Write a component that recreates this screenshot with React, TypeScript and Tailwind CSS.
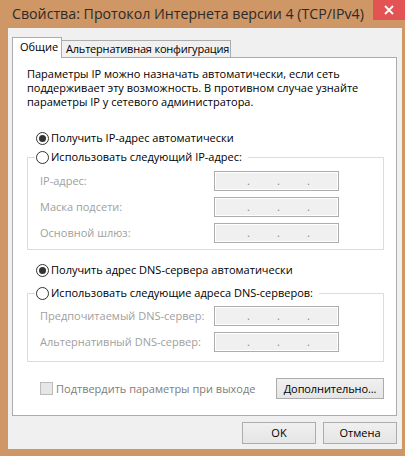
import React from "react";

const font = { fontFamily: '"Open Sans", "Liberation Sans", sans-serif' };

function Radio({ checked }: { checked?: boolean }) {
  return (
    <svg width="13" height="13" viewBox="0 0 13 13" className="shrink-0">
      <circle cx="6.5" cy="6.5" r="6" fill="#ffffff" stroke="#333333" strokeWidth="1" />
      {checked && <circle cx="6.5" cy="6.5" r="3.5" fill="#333333" />}
    </svg>
  );
}

function IpField() {
  return (
    <div className="w-[125px] h-[20px] border border-[#adadad] bg-[#f0f0f0] shadow-[inset_0_0_0_1px_#ffffff] flex items-end pb-[3px] pl-[32px] text-[11px] leading-[12px] text-[#7a8a99]">
      <span className="w-[30px]">.</span>
      <span className="w-[30px]">.</span>
      <span className="w-[30px]">.</span>
    </div>
  );
}

function FieldRow({ label }: { label: string }) {
  return (
    <div className="flex items-center h-[20px] pl-[12px]">
      <div className="w-[174px] text-[11px] text-[#a0a0a0] leading-[14px] whitespace-nowrap">{label}</div>
      <IpField />
    </div>
  );
}

function WinButton({ children, w }: { children: React.ReactNode; w: string }) {
  return (
    <div
      className={`${w} flex items-center justify-center border border-[#acacac] bg-gradient-to-b from-[#f0f0f0] to-[#e5e5e5] text-[11px] text-black leading-[14px] whitespace-nowrap`}
    >
      {children}
    </div>
  );
}

export default function App() {
  return (
    <div className="w-[405px] h-[456px] bg-[#cf9666] flex flex-col overflow-hidden" style={font}>
      {/* Title bar */}
      <div className="h-[28px] flex items-start justify-between shrink-0">
        <div className="pl-[12px] pt-[4px] text-[14.2px] leading-[20px] text-[#2b2b2b] whitespace-nowrap">
          Свойства: Протокол Интернета версии 4 (TCP/IPv4)
        </div>
        <div className="w-[32px] h-[20px] bg-[#e35353] flex items-center justify-center shrink-0">
          <svg width="10" height="10" viewBox="0 0 10 10">
            <path d="M1 1 L9 9 M9 1 L1 9" stroke="#ffffff" strokeWidth="1.8" />
          </svg>
        </div>
      </div>

      {/* Client area */}
      <div className="ml-[8px] w-[394px] h-[421px] bg-[#f0f0f0] pl-[4px] pt-[9px] flex flex-col shrink-0">
        {/* Tabs */}
        <div className="flex items-end h-[20px]">
          <div className="relative z-10 h-[21px] mb-[-1px] w-[50px] bg-white border-t border-l border-r border-[#acacac] flex items-start pt-[2px] pl-[7px] text-[11px] leading-[14px] text-black">
            Общие
          </div>
          <div className="h-[17px] w-[169px] bg-[#f0f0f0] border-t border-r border-[#acacac] flex items-start pt-[1px] pl-[4px] text-[11px] leading-[14px] tracking-[-0.2px] text-black whitespace-nowrap">
            Альтернативная конфигурация
          </div>
        </div>

        {/* Panel */}
        <div className="w-[385px] h-[359px] bg-white border border-[#acacac] pl-[14px] pt-[9px] flex flex-col">
          <p className="text-[11px] leading-[14px] text-black w-[356px]">
            Параметры IP можно назначать автоматически, если сеть поддерживает эту возможность. В противном случае узнайте параметры IP у сетевого администратора.
          </p>

          <div className="mt-[21px] h-[16px] flex items-center gap-[2px] ml-[9px] text-[11px] leading-[14px] text-black">
            <Radio checked />
            <span>Получить IP-адрес автоматически</span>
          </div>

          <fieldset className="mt-[3px] w-[357px] border border-[#dcdcdc] pb-[6px]">
            <legend className="ml-[7px] pl-[1px] pr-[6px] h-[16px] flex items-center gap-[2px] text-[11px] leading-[14px] text-black">
              <Radio />
              <span>Использовать следующий IP-адрес:</span>
            </legend>
            <div className="mt-[6px] flex flex-col gap-[6px]">
              <FieldRow label="IP-адрес:" />
              <FieldRow label="Маска подсети:" />
              <FieldRow label="Основной шлюз:" />
            </div>
          </fieldset>

          <div className="mt-[12px] h-[16px] flex items-center gap-[2px] ml-[9px] text-[11px] leading-[14px] text-black">
            <Radio checked />
            <span>Получить адрес DNS-сервера автоматически</span>
          </div>

          <fieldset className="mt-[7px] w-[357px] border border-[#dcdcdc] pb-[9px]">
            <legend className="ml-[7px] pl-[1px] pr-[6px] h-[16px] flex items-center gap-[2px] text-[11px] leading-[14px] text-black">
              <Radio />
              <span>Использовать следующие адреса DNS-серверов:</span>
            </legend>
            <div className="mt-[5px] flex flex-col gap-[6px]">
              <FieldRow label="Предпочитаемый DNS-сервер:" />
              <FieldRow label="Альтернативный DNS-сервер:" />
            </div>
          </fieldset>

          <div className="mt-[16px] w-[357px] flex items-center justify-between">
            <div className="flex items-center gap-[3px] ml-[13px]">
              <div className="w-[13px] h-[13px] border border-[#bcbcbc] bg-[#e6e6e6]" />
              <span className="text-[11px] leading-[14px] text-[#7d7d7d]">Подтвердить параметры при выходе</span>
            </div>
            <WinButton w="w-[108px] h-[21px] tracking-[-0.1px]">Дополнительно...</WinButton>
          </div>
        </div>

        {/* Bottom buttons */}
        <div className="w-[385px] mt-[6px] flex justify-end gap-[7px]">
          <WinButton w="w-[74px] h-[22px]">OK</WinButton>
          <WinButton w="w-[74px] h-[22px]">Отмена</WinButton>
        </div>
      </div>
    </div>
  );
}
